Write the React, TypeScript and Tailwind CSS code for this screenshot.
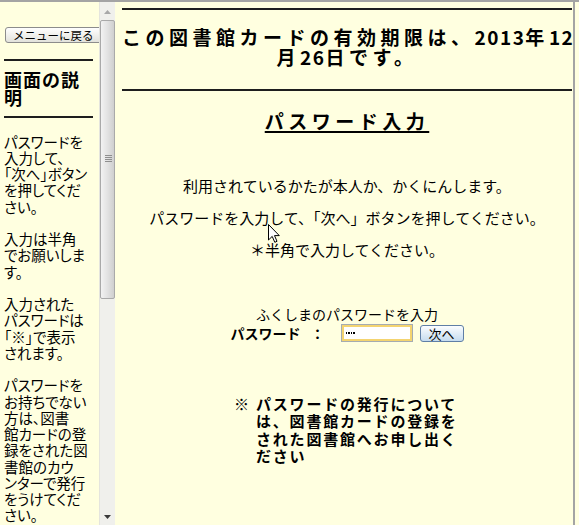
import React from "react";

const leftParas: string[][] = [
  ["パスワードを", "入力して、", "「次へ」ボタン", "を押してくだ", "さい。"],
  ["入力は半角", "でお願いしま", "す。"],
  ["入力された", "パスワードは", "「※」で表示", "されます。"],
  [
    "パスワードを",
    "お持ちでない",
    "方は、図書",
    "館カードの登",
    "録をされた図",
    "書館のカウ",
    "ンターで発行",
    "をうけてくだ",
    "さい。",
  ],
];

function Scrollbar() {
  return (
    <div className="relative w-[16px] h-full shrink-0 bg-[#F0F0EC] border-l border-[#E4E4DE]">
      <div className="absolute left-0 top-0 w-[15px] h-[19px] flex items-center justify-center">
        <svg width="7" height="4" viewBox="0 0 7 4">
          <path d="M0 4 L3.5 0 L7 4 Z" fill="#A8A8A8" />
        </svg>
      </div>
      <div className="absolute left-[0px] top-[18px] w-[15px] h-[279px] rounded-[2px] border border-[#A9A9A9] bg-linear-to-r from-[#F2F2F2] via-[#E2E2E2] to-[#CFCFCF]">
        <div className="absolute left-[4px] top-[134px] flex flex-col gap-[1px]">
          <div className="w-[7px] h-[1px] bg-[#8E8E8E]" />
          <div className="w-[7px] h-[1px] bg-[#8E8E8E]" />
          <div className="w-[7px] h-[1px] bg-[#8E8E8E]" />
          <div className="w-[7px] h-[1px] bg-[#8E8E8E]" />
        </div>
      </div>
      <div className="absolute left-0 bottom-0 w-[15px] h-[16px] flex items-center justify-center">
        <svg width="7" height="4" viewBox="0 0 7 4">
          <path d="M0 0 L7 0 L3.5 4 Z" fill="#3A3A3A" />
        </svg>
      </div>
    </div>
  );
}

export default function App() {
  return (
    <div className="relative w-[579px] h-[525px] overflow-hidden bg-[#FFFFE0] border-t-2 border-[#A4A4A4] flex text-black font-['Noto_Sans_CJK_JP','Noto_Sans',sans-serif]">
      {/* Left frame */}
      <div className="w-[99px] shrink-0 overflow-hidden pl-[4px] flex flex-col">
        <button className="mt-[25px] ml-[1px] shrink-0 w-[100px] h-[16px] rounded-[3px] border border-[#8C8C8C] bg-linear-to-b from-[#FFFFFF] to-[#E2E2DC] text-[11.5px] leading-[14px] text-left pl-[7px] whitespace-nowrap">
          メニューに戻る
        </button>
        <div className="mt-[16px] w-[89px] h-[2px] bg-[#1E1E1E] shrink-0" />
        <div className="mt-[9px] text-[18px] leading-[18px] font-bold tracking-[1px] whitespace-nowrap">
          画面の説
          <br />明
        </div>
        <div className="mt-[10px] w-[89px] h-[2px] bg-[#1E1E1E] shrink-0" />
        <div className="mt-[15.5px] text-[14.5px] leading-[16.25px] flex flex-col gap-[16.25px] [font-feature-settings:'palt']">
          {leftParas.map((lines, i) => (
            <p key={i} className="whitespace-nowrap">
              {lines.map((l, j) => (
                <React.Fragment key={j}>
                  {l}
                  {j < lines.length - 1 && <br />}
                </React.Fragment>
              ))}
            </p>
          ))}
        </div>
      </div>

      <Scrollbar />
      <div className="w-[3px] shrink-0" />

      {/* Right frame */}
      <div className="w-[457px] shrink-0 border-r-2 border-[#A4A4A4] pl-[4px] pr-[1px] flex flex-col">
        <div className="mt-[6px] h-[2px] bg-[#1E1E1E] shrink-0" />
        <h2 className="mt-[17px] text-center text-[19px] leading-[20px] font-bold tracking-[4.5px] whitespace-nowrap">
          この図書館カードの有効期限は、
          <span className="tracking-[1.5px]">2013</span>年
          <span className="tracking-[1.5px]">12</span>
          <br />月<span className="tracking-[1.5px]">26</span>日です。
        </h2>
        <div className="mt-[22px] h-[2px] bg-[#1E1E1E] shrink-0" />
        <h3 className="mt-[20px] text-center text-[19px] leading-[19px] font-bold tracking-[4.5px]">
          <span className="underline decoration-2 underline-offset-[2px]">パスワード入力</span>
        </h3>
        <p className="mt-[48px] text-center text-[15px] leading-[15px] whitespace-nowrap">
          利用されているかたが本人か、かくにんします。
        </p>
        <p className="mt-[17px] text-center text-[15px] leading-[15px] whitespace-nowrap">
          パスワードを入力して、「次へ」ボタンを押してください。
        </p>
        <p className="mt-[17px] text-center text-[15px] leading-[15px] whitespace-nowrap">
          ＊半角で入力してください。
        </p>
        <p className="mt-[50px] text-center text-[14px] leading-[14px] whitespace-nowrap">
          ふくしまのパスワードを入力
        </p>
        <div className="mt-[3px] h-[18px] flex items-center justify-center">
          <span className="text-[14px] leading-[14px] font-bold">パスワード</span>
          <span className="ml-[10px] text-[14px] leading-[14px] font-bold">：</span>
          <div className="ml-[16px] w-[72px] h-[18px] border border-[#A5ACB2] bg-white">
            <div className="w-full h-full border-2 border-[#F4D470] flex items-center pl-[2px] gap-[1px]">
              <div className="w-[1.5px] h-[1.5px] bg-black" />
              <div className="w-[1.5px] h-[1.5px] bg-black" />
              <div className="w-[1.5px] h-[1.5px] bg-black" />
              <div className="w-[1.5px] h-[1.5px] bg-black" />
            </div>
          </div>
          <button className="ml-[7px] w-[44px] h-[17px] rounded-[3px] border border-[#5F7FA6] bg-linear-to-b from-[#FBFDFF] to-[#C6DCEF] text-[13px] leading-[13px] flex items-center justify-center">
            次へ
          </button>
        </div>
        <div className="mt-[53px] mx-auto w-[226px] flex text-[15px] leading-[17.3px] font-bold">
          <span className="w-[22px] shrink-0">※</span>
          <span className="tracking-[1.8px] whitespace-nowrap">
            パスワードの発行について
            <br />
            は、図書館カードの登録を
            <br />
            された図書館へお申し出く
            <br />
            ださい
          </span>
        </div>
      </div>

      {/* mouse cursor */}
      <svg
        className="absolute left-[268px] top-[222px]"
        width="12"
        height="19"
        viewBox="0 0 12 19"
      >
        <path
          d="M0.5 0.5 L0.5 16 L4.2 12.4 L6.8 18.3 L9 17.3 L6.5 11.6 L11.3 11.6 Z"
          fill="white"
          stroke="black"
          strokeWidth="1"
          strokeLinejoin="miter"
        />
      </svg>
    </div>
  );
}
